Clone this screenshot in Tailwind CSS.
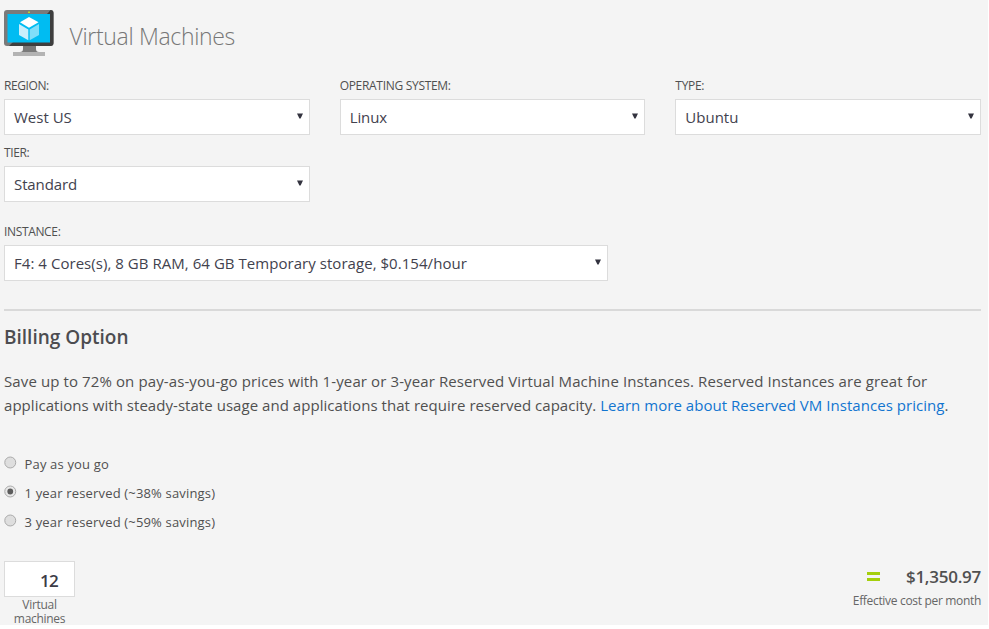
<!DOCTYPE html>
<html lang="en"><head><meta charset="utf-8"><title>Virtual Machines</title>
<script src="https://cdn.jsdelivr.net/npm/@tailwindcss/browser@4"></script></head>
<body class="h-[629px] w-[989px] overflow-hidden bg-white font-['Open_Sans','Noto_Sans',sans-serif] text-[#505050]">
<main class="h-[625px] w-[988px] bg-[#f4f4f4] pt-[9px] pr-[7px] pl-1">
<header class="flex h-12 items-start gap-[15.500px]">
<svg class="h-[48px] w-[50px] shrink-0" viewBox="0 0 50 48">
<rect x="0" y="1" width="49.500" height="36" rx="3" fill="#7a7a7a"/>
<path d="M46.500 1q3 0 3 3v30q0 3-3 3H5l4-4L44 4z" fill="#3e3e3e"/>
<rect x="3.500" y="5" width="42.500" height="28.500" fill="#00bcf2"/>
<rect x="24" y="2.500" width="2" height="1.500" fill="#b8d432"/>
<path d="M19 37h13v3q0 3 3 3H16q3 0 3-3z" fill="#7a7a7a"/>
<rect x="9" y="43" width="32" height="4" fill="#b3b3b3"/>
<path d="M25 8l9.500 5.300-9.500 5.500-9-5.500z" fill="#fff"/>
<path d="M15 15l9.300 5.400v10.800L15 26z" fill="#c9effc"/>
<path d="M35 15l-9.300 5.400v10.800L35 26z" fill="#80def9"/>
</svg>
<h1 class="mt-[10px] text-[23px] font-light leading-[34px] tracking-[-0.33px] text-[#777]">Virtual Machines</h1>
</header>
<form>
<section class="grid grid-cols-3 gap-x-[30px] text-[15px] text-[#42424e]">
<div class="pt-5">
<div class="h-[22px] text-[12px] leading-[18px] tracking-[-0.4px] text-[#505050]">REGION:</div>
<div class="flex h-9 items-center justify-between border border-[#dcdcdc] bg-white pr-[6px] pl-[9px]"><span>West US</span><svg class="mb-[2px] h-[6px] w-[6px]" viewBox="0 0 7 6"><path d="M0 0h7L4.200 6H2.800z" fill="#33333f"/></svg></div>
</div>
<div class="pt-5">
<div class="h-[22px] text-[12px] leading-[18px] tracking-[-0.3px] text-[#505050]">OPERATING SYSTEM:</div>
<div class="flex h-9 items-center justify-between border border-[#dcdcdc] bg-white pr-[6px] pl-[9px]"><span class="tracking-[-0.1px]">Linux</span><svg class="mb-[2px] h-[6px] w-[6px]" viewBox="0 0 7 6"><path d="M0 0h7L4.200 6H2.800z" fill="#33333f"/></svg></div>
</div>
<div class="pt-5">
<div class="h-[22px] text-[12px] leading-[18px] tracking-[-0.3px] text-[#505050]">TYPE:</div>
<div class="flex h-9 items-center justify-between border border-[#dcdcdc] bg-white pr-[6px] pl-[9px]"><span>Ubuntu</span><svg class="mb-[2px] h-[6px] w-[6px]" viewBox="0 0 7 6"><path d="M0 0h7L4.200 6H2.800z" fill="#33333f"/></svg></div>
</div>
<div class="pt-[9px]">
<div class="h-[22px] text-[12px] leading-[18px] tracking-[-0.4px] text-[#505050]">TIER:</div>
<div class="flex h-9 items-center justify-between border border-[#dcdcdc] bg-white pr-[6px] pl-[9px]"><span class="tracking-[-0.1px]">Standard</span><svg class="mb-[2px] h-[6px] w-[6px]" viewBox="0 0 7 6"><path d="M0 0h7L4.200 6H2.800z" fill="#33333f"/></svg></div>
</div>
</section>
<section class="w-[604px] pt-[21px] text-[15px] text-[#42424e]">
<div class="h-[22px] text-[12px] leading-[18px] tracking-[-0.35px] text-[#505050]">INSTANCE:</div>
<div class="flex h-9 items-center justify-between border border-[#dcdcdc] bg-white pr-[6px] pl-[9px]"><span class="tracking-[0.045px]">F4: 4 Cores(s), 8 GB RAM, 64 GB Temporary storage, $0.154/hour</span><svg class="mb-[2px] h-[6px] w-[6px]" viewBox="0 0 7 6"><path d="M0 0h7L4.200 6H2.800z" fill="#33333f"/></svg></div>
</section>
<section class="mt-7 border-t-2 border-[#d9d9d9] pt-[13px]">
<h2 class="text-[19px] font-semibold leading-[26px] text-[#4c4c50]">Billing Option</h2>
<p class="mt-[19px] text-[15px] leading-6 whitespace-nowrap"><span class="tracking-[0.108px]">Save up to 72% on pay-as-you-go prices with 1-year or 3-year Reserved Virtual Machine Instances. Reserved Instances are great for</span><br><span class="tracking-[0.043px]">applications with steady-state usage and applications that require reserved capacity. <a class="text-[#1275d0]">Learn more about Reserved VM Instances pricing</a>.</span></p>
<div class="mt-[33px] text-[13px] leading-[29px] tracking-[0.17px]">
<div class="flex h-[29px] gap-2"><svg class="mt-[6px] h-[13px] w-[12.500px]" viewBox="0 0 13 13"><circle cx="6.500" cy="6.500" r="5.700" fill="#dedede" stroke="#a8a8a8"/></svg><span>Pay as you go</span></div>
<div class="flex h-[29px] gap-2"><svg class="mt-[6px] h-[13px] w-[12.500px]" viewBox="0 0 13 13"><circle cx="6.500" cy="6.500" r="5.700" fill="#e8e8e8" stroke="#a8a8a8"/><circle cx="6.500" cy="6.500" r="3" fill="#5c5c5c"/></svg><span>1 year reserved (~38% savings)</span></div>
<div class="flex h-[29px] gap-2"><svg class="mt-[6px] h-[13px] w-[12.500px]" viewBox="0 0 13 13"><circle cx="6.500" cy="6.500" r="5.700" fill="#dedede" stroke="#a8a8a8"/></svg><span>3 year reserved (~59% savings)</span></div>
</div>
</section>
<section class="mt-[24px] flex items-start justify-between">
<div class="w-[71px]">
<div class="h-9 border border-[#dcdcdc] bg-white pr-[16px] text-right text-[17px] font-semibold leading-[37px] tracking-[-0.7px] text-[#3c3c46]">12</div>
<div class="mt-[1px] text-center text-[12px] leading-[14px] tracking-[-0.3px] text-[#666]">Virtual<br>machines</div>
</div>
<div class="text-right">
<div class="flex items-center justify-end gap-[26px] text-[17px] font-semibold leading-[31px] tracking-[-0.25px]"><svg class="h-[9px] w-[13px]" viewBox="0 0 13 9"><path d="M0 0h13v3H0zM0 6h13v3H0z" fill="#a4cf0c"/></svg><span>$1,350.97</span></div>
<div class="text-[12px] leading-[17px] tracking-[-0.32px] text-[#666]">Effective cost per month</div>
</div>
</section>
</form>
</main>
</body></html>
